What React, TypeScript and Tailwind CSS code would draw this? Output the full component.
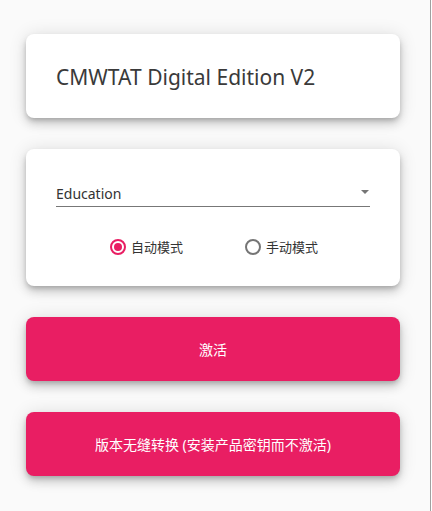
import { useState } from "react";

const FONT = { fontFamily: '"Noto Sans", "Noto Sans CJK SC", sans-serif' };

// Card shadow, roughly Material elevation 6.
const CARD =
  "w-[374px] rounded-[8px] bg-white shadow-[0_3px_5px_-1px_rgba(0,0,0,0.2),0_6px_10px_0_rgba(0,0,0,0.14),0_1px_18px_0_rgba(0,0,0,0.12)]";

function Radio({ checked, label, onClick }: { checked: boolean; label: string; onClick: () => void }) {
  return (
    <button onClick={onClick} className="flex items-center gap-[5px] h-[20px]">
      <span
        className={`flex items-center justify-center w-[16px] h-[16px] rounded-full border-2 ${
          checked ? "border-[#e91e63]" : "border-[#757575]"
        }`}
      >
        {checked && <span className="w-[8px] h-[8px] rounded-full bg-[#e91e63]" />}
      </span>
      <span className="text-[13px] leading-[20px] text-[#333]">{label}</span>
    </button>
  );
}

export default function App() {
  const [auto, setAuto] = useState(true);

  return (
    <div className="flex min-h-[511px] w-[432px]" style={FONT}>
      <main className="w-[430px] bg-[#fafafa] pt-[34px] pl-[26px] flex flex-col gap-[31px]">
        {/* Titel */}
        <div className={`${CARD} h-[84px] flex items-center px-[30px]`}>
          <h1 className="text-[21px] leading-[28px] text-[#3a3a3a] pt-[2px]">CMWTAT Digital Edition V2</h1>
        </div>

        {/* Version + läge */}
        <div className={`${CARD} pt-[35px] pb-[29px] px-[30px]`}>
          <div className="flex items-center justify-between border-b border-[#777] pb-[2px]">
            <span className="text-[14px] leading-[20px] text-[#333]">Education</span>
            <svg width="8" height="4" viewBox="0 0 8 4" className="mr-[1px] -mt-[4px]">
              <path d="M0 0 L8 0 L4 4 Z" fill="#757575" />
            </svg>
          </div>
          <div className="mt-[30px] flex justify-center gap-[62px] pl-[2px]">
            <Radio checked={auto} label="自动模式" onClick={() => setAuto(true)} />
            <Radio checked={!auto} label="手动模式" onClick={() => setAuto(false)} />
          </div>
        </div>

        {/* Knappar */}
        <button className={`${CARD} h-[64px] !bg-[#e91e63] text-white text-[14px]`}>激活</button>
        <button className={`${CARD} h-[64px] !bg-[#e91e63] text-white text-[14px]`}>
          版本无缝转换 (安装产品密钥而不激活)
        </button>
      </main>
      <div className="w-px bg-[#a0a0a0]" />
      <div className="w-px bg-white" />
    </div>
  );
}
